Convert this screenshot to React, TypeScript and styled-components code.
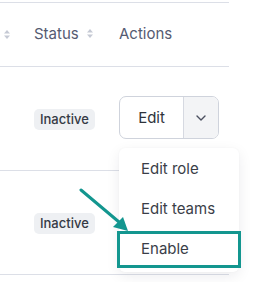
import React from 'react';
import styled, { createGlobalStyle } from 'styled-components';

const rows = [{ status: 'Inactive', showActions: true }, { status: 'Inactive', showActions: false }];
const menuItems = ['Edit role', 'Edit teams', 'Enable'];

const SortIcon: React.FC = () => (
    <svg width="6" height="9" viewBox="0 0 6 9">
        <path d="M3 0 L6 3.5 H0 Z" fill="#c5c9d4" />
        <path d="M3 9 L6 5.5 H0 Z" fill="#c5c9d4" />
    </svg>
);

const App: React.FC = () => {

    return (
        <>
            <GlobalStyle />
            <Page>
                <Table>
                    <HeaderRow>
                        <Cell><SortIcon /></Cell>
                        <HeaderCell>Status <SortIcon /></HeaderCell>
                        <HeaderCell>Actions</HeaderCell>
                    </HeaderRow>
                    {rows.map((row, i) => (
                        <BodyRow key={i}>
                            <Cell />
                            <Cell><Badge>{row.status}</Badge></Cell>
                            <Cell>
                                {row.showActions && (
                                    <SplitButton>
                                        <MainPart>Edit</MainPart>
                                        <CaretPart>
                                            <svg width="12" height="8" viewBox="0 0 12 8">
                                                <path d="M2 2 L6 6 L10 2" fill="none" stroke="#4b5060" strokeWidth="1.4" strokeLinecap="round" strokeLinejoin="round" />
                                            </svg>
                                        </CaretPart>
                                    </SplitButton>
                                )}
                            </Cell>
                        </BodyRow>
                    ))}
                </Table>
                <Menu>
                    {menuItems.map((item) => (
                        <MenuItem key={item} $highlight={item === 'Enable'}>{item}</MenuItem>
                    ))}
                </Menu>
                <Arrow width="60" height="50" viewBox="0 0 60 50">
                    <line x1="2" y1="2" x2="40" y2="34" stroke="#13968f" strokeWidth="3" strokeLinecap="round" />
                    <path d="M49 43 L34 39 L44 29 Z" fill="#13968f" />
                </Arrow>
            </Page>
        </>
    );
};

export default App;

const GlobalStyle = createGlobalStyle`
  body {
    margin: 0;
    background: #ffffff;
    font-family: Inter, "Noto Sans", sans-serif;
  }
`;

const Page = styled.div`
  position: relative;
  width: 268px;
  height: 282px;
  overflow: hidden;
  padding-top: 2px;
  box-sizing: border-box;
`;

const Table = styled.div`
  width: 229px;
  border-top: 1px solid #dcdfe7;
`;

const HeaderRow = styled.div`
  display: grid;
  grid-template-columns: 18px 85px 126px;
  height: 63px;
  border-bottom: 1px solid #dcdfe7;
  align-items: center;
`;

const BodyRow = styled(HeaderRow)`
  height: 103px;
`;

const Cell = styled.div`
  display: flex;
  align-items: center;
  padding-left: 4px;

  & + & {
    padding-left: 16px;
  }
`;

const HeaderCell = styled(Cell)`
  gap: 8px;
  font-size: 15px;
  color: #555b72;
  padding-bottom: 2px;
`;

const Badge = styled.span`
  display: inline-block;
  background: #eef0f3;
  color: #353a45;
  font-size: 13px;
  font-weight: 500;
  line-height: 21px;
  padding: 0 6px;
  border-radius: 5px;
  margin-top: 1px;
`;

const SplitButton = styled.div`
  display: flex;
  height: 43px;
  width: 100px;
  border: 1px solid #cfd3dc;
  border-radius: 7px;
  box-sizing: border-box;
  overflow: hidden;
  margin-top: -2px;
`;

const MainPart = styled.div`
  width: 63px;
  display: flex;
  align-items: center;
  justify-content: center;
  font-size: 15px;
  color: #2f333c;
  border-right: 1px solid #d6d9e1;
`;

const CaretPart = styled.div`
  flex: 1;
  display: flex;
  align-items: center;
  justify-content: center;
  background: #f3f4f6;
`;

const Menu = styled.div`
  position: absolute;
  left: 119px;
  top: 148px;
  width: 120px;
  background: #ffffff;
  border-radius: 6px;
  box-shadow: 0 4px 14px rgba(20, 30, 50, 0.08), 0 0 2px rgba(20, 30, 50, 0.04);
  padding-bottom: 4px;
`;

const MenuItem = styled.div<{ $highlight?: boolean }>`
  position: relative;
  height: 40px;
  display: flex;
  align-items: center;
  padding-left: 22px;
  font-size: 15px;
  color: #3a3e48;

  ${({ $highlight }) => $highlight && `
    &::after {
      content: '';
      position: absolute;
      left: -2px;
      right: -2px;
      top: 3px;
      bottom: 0;
      border: 3px solid #13968f;
    }
  `}
`;

const Arrow = styled.svg`
  position: absolute;
  left: 79px;
  top: 188px;
`;
